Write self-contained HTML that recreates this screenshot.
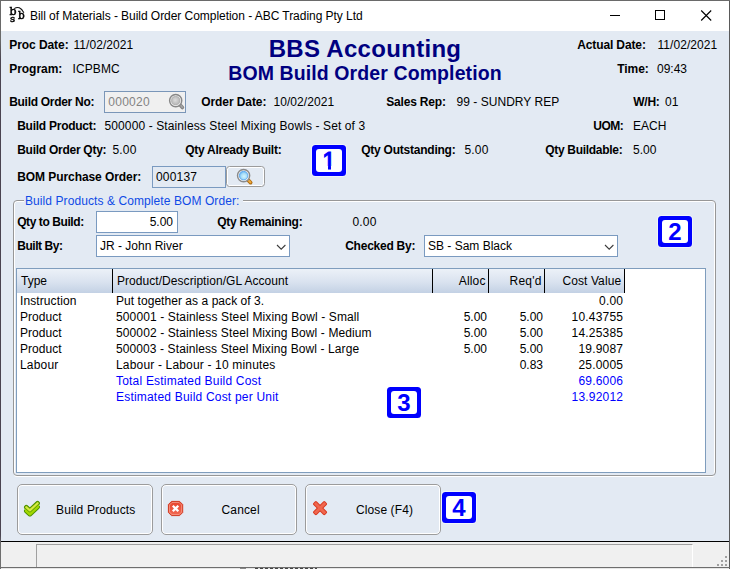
<!DOCTYPE html>
<html>
<head>
<meta charset="utf-8">
<title>Bill of Materials - Build Order Completion</title>
<style>
html,body{margin:0;padding:0;}
body{width:730px;height:569px;overflow:hidden;background:#e3eaf3;font-family:"Liberation Sans",sans-serif;font-size:12px;color:#000;position:relative;}
.abs{position:absolute;white-space:nowrap;}
.t{position:absolute;white-space:nowrap;line-height:14px;height:14px;}
.b{font-weight:bold;}
.blue{color:#0000ff;}
#titlebar{position:absolute;left:1px;top:1px;width:728px;height:30px;background:#fff;}
#title{position:absolute;left:29px;top:7px;font-size:12px;line-height:16px;letter-spacing:-0.045px;color:#000;white-space:nowrap;}
.h1{position:absolute;left:0;width:730px;text-align:center;color:#000080;font-weight:bold;white-space:nowrap;}
.inp{position:absolute;box-sizing:border-box;border:1px solid #7a9ac0;background:#fff;}
.marker{position:absolute;box-sizing:border-box;width:34px;height:31px;padding:4px;border-radius:3.5px;background:#0000ff;box-shadow:0 0 0 1px rgba(255,255,255,0.5);}
.marker span{display:block;width:26px;height:23px;border-radius:3px;background:#fff;color:#0000ff;font-weight:bold;font-size:24px;line-height:23px;text-align:center;}
.marker span.one{font-weight:normal;-webkit-text-stroke:1.1px #0000ff;}
.btn{position:absolute;box-sizing:border-box;width:136px;height:51px;border:1px solid #9c9c9c;border-radius:5px;background:#e3eaf3;box-shadow:inset 0 0 0 1px #fff;}
.btn span{position:absolute;top:18px;line-height:14px;font-size:12px;white-space:nowrap;}
.combo{position:absolute;box-sizing:border-box;border:1px solid #7a9ac0;background:#fff;height:22px;width:194px;}
.combo span{position:absolute;left:3px;top:3px;line-height:14px;}
.hd{position:absolute;top:0;height:24px;box-sizing:border-box;border-right:1px solid #000;line-height:24px;white-space:nowrap;}
.row{position:absolute;left:0;height:16px;line-height:16px;width:100%;}
.row span{position:absolute;top:0;white-space:nowrap;}
.r{text-align:right;}
</style>
</head>
<body>
<div id="titlebar">
  <svg style="position:absolute;left:8px;top:4px;filter:grayscale(1)" width="19" height="20" viewBox="0 0 19 20">
    <g font-family="DejaVu Serif,Liberation Serif,serif" fill="#000" stroke="#000" stroke-width="0.5">
    <text x="0.5" y="9.8" font-size="11">b</text>
    <text x="1.1" y="17" font-size="10">s</text>
    <text x="9" y="14" font-size="10.5">b</text>
    </g>
    <path d="M5.2 3.6 Q10.6 0 14.9 7.7" fill="none" stroke="#111" stroke-width="1.1"/>
  </svg>
  <div id="title">Bill of Materials - Build Order Completion - ABC Trading Pty Ltd</div>
  <svg style="position:absolute;left:600px;top:0" width="128" height="30" viewBox="0 0 128 30">
    <path d="M9 14.5 H19" stroke="#000" stroke-width="1" fill="none"/>
    <rect x="54.5" y="9.5" width="9" height="9" stroke="#000" stroke-width="1" fill="none"/>
    <path d="M100.2 9.5 L110.2 19.5 M110.2 9.5 L100.2 19.5" stroke="#000" stroke-width="1.1" fill="none"/>
  </svg>
</div>
<div class="t b" style="left:9.2px;top:38px;letter-spacing:-0.061px;">Proc Date:</div>
<div class="t" style="left:73.5px;top:38px;letter-spacing:0.056px;">11/02/2021</div>
<div class="t b" style="left:9.2px;top:62px;letter-spacing:-0.036px;">Program:</div>
<div class="t" style="left:72.5px;top:62px;letter-spacing:0.1px;">ICPBMC</div>
<div class="h1" style="top:35px;font-size:24px;line-height:28px;letter-spacing:0.3px;">BBS Accounting</div>
<div class="h1" style="top:61.5px;font-size:19.5px;line-height:22px;letter-spacing:0.1px;">BOM Build Order Completion</div>
<div class="t b" style="left:577.2px;top:38px;letter-spacing:-0.118px;">Actual Date:</div>
<div class="t" style="left:657.5px;top:38px;letter-spacing:0.056px;">11/02/2021</div>
<div class="t b" style="left:617.2px;top:62px;letter-spacing:-0.05px;">Time:</div>
<div class="t" style="left:657px;top:62px;">09:43</div>
<div class="t b" style="left:9.2px;top:95px;letter-spacing:-0.293px;">Build Order No:</div>
<div class="inp" style="left:104px;top:91px;width:82px;height:22px;background:#f0f0f0;border-color:#7a96b8;color:#838383"><span class="abs" style="left:3.2px;top:3px;line-height:14px;letter-spacing:0.3px">000020</span>
 <svg style="position:absolute;left:63px;top:0px" width="18" height="19" viewBox="0 0 18 19">
  <defs><radialGradient id="gl" cx="45%" cy="45%" r="65%"><stop offset="0" stop-color="#dcdcdc"/><stop offset="1" stop-color="#b0b0b0"/></radialGradient></defs>
  <line x1="11.6" y1="12.4" x2="14.4" y2="15.5" stroke="#858585" stroke-width="3.6" stroke-linecap="round"/>
  <line x1="12.2" y1="12.8" x2="14.3" y2="15.2" stroke="#a4a4a4" stroke-width="1.6" stroke-linecap="round"/>
  <circle cx="7.7" cy="8.6" r="6.1" fill="#eeeeee" stroke="#878787" stroke-width="1.4"/>
  <circle cx="7.7" cy="8.6" r="4.1" fill="url(#gl)" stroke="#a8a8a8" stroke-width="0.8"/>
 </svg></div>
<div class="t b" style="left:201.2px;top:95px;letter-spacing:-0.08px;">Order Date:</div>
<div class="t" style="left:273.5px;top:95px;letter-spacing:0.056px;">10/02/2021</div>
<div class="t b" style="left:386.2px;top:95px;letter-spacing:-0.182px;">Sales Rep:</div>
<div class="t" style="left:456.5px;top:95px;letter-spacing:0.036px;">99 - SUNDRY REP</div>
<div class="t b" style="left:633.2px;top:95px;letter-spacing:-0.217px;">W/H:</div>
<div class="t" style="left:665px;top:95px;">01</div>
<div class="t b" style="left:17.2px;top:119px;letter-spacing:-0.255px;">Build Product:</div>
<div class="t" style="left:104.5px;top:119px;letter-spacing:0.111px;">500000 - Stainless Steel Mixing Bowls - Set of 3</div>
<div class="t b" style="left:593.2px;top:119px;letter-spacing:-0.467px;">UOM:</div>
<div class="t" style="left:633px;top:119px;">EACH</div>
<div class="t b" style="left:17.2px;top:143px;letter-spacing:-0.263px;">Build Order Qty:</div>
<div class="t" style="left:112.5px;top:143px;letter-spacing:0.167px;">5.00</div>
<div class="t b" style="left:185.2px;top:143px;letter-spacing:-0.262px;">Qty Already Built:</div>
<div class="t b" style="left:361.2px;top:143px;letter-spacing:-0.233px;">Qty Outstanding:</div>
<div class="t" style="left:464.5px;top:143px;letter-spacing:0.167px;">5.00</div>
<div class="t b" style="left:545.2px;top:143px;letter-spacing:-0.295px;">Qty Buildable:</div>
<div class="t" style="left:633px;top:143px;">5.00</div>
<div class="t b" style="left:17.2px;top:170px;letter-spacing:-0.071px;">BOM Purchase Order:</div>
<div class="inp" style="left:152px;top:166px;width:74px;height:22px;background:#e3eaf3"><span class="abs" style="left:3px;top:3px;line-height:14px;letter-spacing:0.2px">000137</span></div>
<div class="abs" style="left:226px;top:166px;width:39px;height:21px;box-sizing:border-box;border:1px solid #9c9c9c;border-radius:3.5px;background:#e3eaf3;box-shadow:inset 0 0 0 1px #fff">
 <svg style="position:absolute;left:9px;top:1px" width="19" height="19" viewBox="0 0 19 19">
  <defs><radialGradient id="bl" cx="55%" cy="58%" r="62%"><stop offset="0" stop-color="#d2f5fd"/><stop offset="0.55" stop-color="#a6dcf8"/><stop offset="1" stop-color="#56aaf2"/></radialGradient></defs>
  <line x1="12.2" y1="12.2" x2="14.6" y2="14.6" stroke="#b06e14" stroke-width="3.8" stroke-linecap="round"/>
  <line x1="12.6" y1="12.4" x2="14.4" y2="14.2" stroke="#f0aa3a" stroke-width="2" stroke-linecap="round"/>
  <line x1="10.6" y1="10.6" x2="12.2" y2="12.2" stroke="#a8a8a8" stroke-width="3.2" />
  <circle cx="7.6" cy="7.6" r="6.1" fill="#f4f4f4" stroke="#8a8a8a" stroke-width="1.4"/>
  <circle cx="7.6" cy="7.6" r="4.3" fill="url(#bl)" stroke="#5aa6ee" stroke-width="0.8"/>
 </svg></div>
<div class="marker" style="left:312px;top:145px"><span class="one" style="position:relative">1<i style="position:absolute;left:6px;top:17.3px;width:5.7px;height:4px;background:#fff"></i><i style="position:absolute;left:15.3px;top:17.3px;width:6px;height:4px;background:#fff"></i></span></div>
<div class="abs" style="left:14px;top:201px;width:701px;height:276px;box-sizing:border-box;border:1px solid #fff;border-radius:3px;border-right-color:transparent;"></div>
<div class="abs" style="left:13px;top:200px;width:702px;height:275px;box-sizing:border-box;border:1px solid #fff;border-radius:3px;border-left-color:transparent;border-top-color:transparent;border-bottom-color:transparent;"></div>
<div class="abs" style="left:13px;top:200px;width:703px;height:276px;box-sizing:border-box;border:1px solid #979797;border-radius:4px;"></div>
<div class="t" style="left:23.5px;top:194px;letter-spacing:0.084px;padding:0 4px 0 1.5px;background:#e3eaf3;color:#0f4ae6;">Build Products &amp; Complete BOM Order:</div>
<div class="t b" style="left:17.2px;top:215px;letter-spacing:-0.417px;">Qty to Build:</div>
<div class="inp" style="left:96px;top:211px;width:82px;height:22px;"><span class="abs" style="right:4px;top:3px;line-height:14px">5.00</span></div>
<div class="t b" style="left:217.2px;top:215px;letter-spacing:-0.245px;">Qty Remaining:</div>
<div class="t" style="left:352.5px;top:215px;letter-spacing:0.167px;">0.00</div>
<div class="t b" style="left:17.2px;top:239px;letter-spacing:-0.455px;">Built By:</div>
<div class="combo" style="left:96px;top:235px"><span>JR - John River</span><svg style="position:absolute;left:179px;top:8px" width="11" height="7" viewBox="0 0 11 7"><path d="M1 1 L5.2 5.2 L9.4 1" fill="none" stroke="#3c3c3c" stroke-width="1.1"/></svg></div>
<div class="t b" style="left:345.2px;top:239px;letter-spacing:-0.24px;">Checked By:</div>
<div class="combo" style="left:424px;top:235px"><span>SB - Sam Black</span><svg style="position:absolute;left:179px;top:8px" width="11" height="7" viewBox="0 0 11 7"><path d="M1 1 L5.2 5.2 L9.4 1" fill="none" stroke="#3c3c3c" stroke-width="1.1"/></svg></div>
<div class="marker" style="left:658px;top:216px"><span>2</span></div>
<div class="abs" style="left:16px;top:268px;width:690px;height:205px;box-sizing:border-box;border:1px solid #7f9dbd;background:#fff;">
  <div class="abs" style="left:0;top:0;width:608px;height:24px;background:linear-gradient(#ecf1f8,#d9e2ef 55%,#c3d1e4);"></div>
  <div class="hd" style="left:0;width:96px;padding-left:4px;border-right-width:1.4px">Type</div>
  <div class="hd" style="left:96px;width:320px;padding-left:4px;letter-spacing:0.05px;border-right-width:1.4px">Product/Description/GL Account</div>
  <div class="hd r" style="left:416px;width:56px;padding-right:2.3px;letter-spacing:0.2px;border-right-width:1.4px">Alloc</div>
  <div class="hd r" style="left:472px;width:56px;padding-right:2.3px;letter-spacing:0.25px;border-right-width:1.4px">Req'd</div>
  <div class="hd r" style="left:528px;width:80px;padding-right:2.8px;letter-spacing:0.1px;border-right-width:1.4px">Cost Value</div>
  <div class="row" style="top:24px"><span style="left:3px;letter-spacing:0.1px">Instruction</span><span style="left:99px;letter-spacing:0.05px">Put together as a pack of 3.</span><span style="right:81.8px;letter-spacing:0.2px">0.00</span></div>
  <div class="row" style="top:40px"><span style="left:3px;letter-spacing:0.05px">Product</span><span style="left:99px;letter-spacing:0.12px">500001 - Stainless Steel Mixing Bowl - Small</span><span style="right:218px">5.00</span><span style="right:162px">5.00</span><span style="right:81.8px;letter-spacing:0.2px">10.43755</span></div>
  <div class="row" style="top:56px"><span style="left:3px;letter-spacing:0.05px">Product</span><span style="left:99px;letter-spacing:0.11px">500002 - Stainless Steel Mixing Bowl - Medium</span><span style="right:218px">5.00</span><span style="right:162px">5.00</span><span style="right:81.8px;letter-spacing:0.2px">14.25385</span></div>
  <div class="row" style="top:72px"><span style="left:3px;letter-spacing:0.05px">Product</span><span style="left:99px;letter-spacing:0.1px">500003 - Stainless Steel Mixing Bowl - Large</span><span style="right:218px">5.00</span><span style="right:162px">5.00</span><span style="right:81.8px;letter-spacing:0.2px">19.9087</span></div>
  <div class="row" style="top:88px"><span style="left:3px;letter-spacing:0.17px">Labour</span><span style="left:99px;letter-spacing:0.17px">Labour - Labour - 10 minutes</span><span style="right:162px">0.83</span><span style="right:81.8px;letter-spacing:0.2px">25.0005</span></div>
  <div class="row blue" style="top:104px"><span style="left:99px;letter-spacing:0.2px">Total Estimated Build Cost</span><span style="right:81.8px;letter-spacing:0.2px">69.6006</span></div>
  <div class="row blue" style="top:120px"><span style="left:99px;letter-spacing:0.2px">Estimated Build Cost per Unit</span><span style="right:81.8px;letter-spacing:0.2px">13.92012</span></div>
</div>
<div class="marker" style="left:387px;top:387px"><span>3</span></div>
<div class="btn" style="left:17px;top:484px"><svg style="position:absolute;left:5px;top:15px" width="18" height="19" viewBox="0 0 18 19">
  <g fill="none" stroke-linecap="round" stroke-linejoin="round">
   <path d="M3.3 11 L6.9 14.2 L14.6 7" stroke="#4b8f00" stroke-width="4.6"/>
   <path d="M3.3 7.2 L6.9 10.4 L14.6 3.2" stroke="#4b8f00" stroke-width="4.6"/>
   <path d="M3.3 11 L6.9 14.2 L14.6 7" stroke="#a2d800" stroke-width="2.8"/>
   <path d="M3.3 9.4 L6.9 12.6 L14.6 5.4" stroke="#a2d800" stroke-width="2.8"/>
   <path d="M3.3 7.2 L6.9 10.4 L14.6 3.2" stroke="#5a9a00" stroke-width="3.8"/>
   <path d="M3.3 7.2 L6.9 10.4 L14.6 3.2" stroke="#d8ea40" stroke-width="2.2"/>
  </g></svg><span style="left:38px;letter-spacing:0.15px">Build Products</span></div>
<div class="btn" style="left:161px;top:484px"><svg style="position:absolute;left:5px;top:15px" width="17" height="17" viewBox="0 0 17 17">
  <defs><linearGradient id="go" x1="0" y1="0" x2="0" y2="1"><stop offset="0" stop-color="#e6442c"/><stop offset="1" stop-color="#f26a54"/></linearGradient></defs>
  <path d="M4.5 1.4 H12.6 L15.7 4.5 V12.5 L12.6 15.6 H4.5 L1.4 12.5 V4.5 Z" fill="url(#go)" stroke="#d03820" stroke-width="1" stroke-linejoin="round"/>
  <path d="M5 2.5 H12.1 L14.6 5 V12 L12.1 14.5 H5 L2.5 12 V5 Z" fill="none" stroke="#f59a88" stroke-width="0.8"/>
  <path d="M5.8 5.75 L11.3 11.25 M11.3 5.75 L5.8 11.25" stroke="#fff" stroke-width="2.3" fill="none"/>
 </svg><span style="left:59.5px;letter-spacing:0.15px">Cancel</span></div>
<div class="btn" style="left:305px;top:484px"><svg style="position:absolute;left:6px;top:15px" width="17" height="17" viewBox="0 0 17 17">
  <g transform="translate(8.05 8.1)">
   <rect x="-8.3" y="-2.4" width="16.6" height="4.8" rx="1.4" fill="#d8391f" transform="rotate(45)"/>
   <rect x="-8.3" y="-2.4" width="16.6" height="4.8" rx="1.4" fill="#d8391f" transform="rotate(-45)"/>
   <rect x="-7.4" y="-1.5" width="14.8" height="3" rx="0.9" fill="#f0674e" transform="rotate(45)"/>
   <rect x="-7.4" y="-1.5" width="14.8" height="3" rx="0.9" fill="#f0674e" transform="rotate(-45)"/>
  </g>
 </svg><span style="left:50px;letter-spacing:0.1px">Close (F4)</span></div>
<div class="marker" style="left:442px;top:492px"><span>4</span></div>
<div class="abs" style="left:1px;top:541px;width:728px;height:1px;background:#000;"></div>
<div class="abs" style="left:1px;top:542px;width:728px;height:25px;background:#f0f0f0;"></div>
<div class="abs" style="left:36px;top:544px;width:657px;height:23px;box-sizing:border-box;border-left:1px solid #a0a0a0;border-top:1px solid #a0a0a0;border-right:1px solid #fff;"></div>
<svg class="abs" style="left:716px;top:553px" width="14" height="14" viewBox="0 0 14 14">
  <g fill="#a0a0a0"><rect x="9" y="3" width="2" height="2"/><rect x="5" y="7" width="2" height="2"/><rect x="9" y="7" width="2" height="2"/><rect x="1" y="11" width="2" height="2"/><rect x="5" y="11" width="2" height="2"/><rect x="9" y="11" width="2" height="2"/></g>
</svg>
<div class="abs" style="left:0;top:0;width:1px;height:569px;background:linear-gradient(#6a6a6a 0,#6a6a6a 40px,#4a4450 60px,#4a4450 535px,#6e6e6e 545px);"></div>
<div class="abs" style="left:729px;top:0;width:1px;height:569px;background:#5a5a5a;"></div>
<div class="abs" style="left:0;top:0;width:730px;height:1px;background:#6a6a6a;"></div>
<div class="abs" style="left:0;top:567px;width:730px;height:1px;background:#6e6e6e;"></div>
<div class="abs" style="left:1px;top:568px;width:728px;height:1px;background:#e6e6e6;"></div>
<div class="abs" style="left:240px;top:568px;width:6px;height:1px;background:#888;"></div>
<div class="abs" style="left:255px;top:568px;width:62px;height:1px;background:repeating-linear-gradient(90deg,#444 0 3px,#ddd 3px 5px);"></div>
</body>
</html>
